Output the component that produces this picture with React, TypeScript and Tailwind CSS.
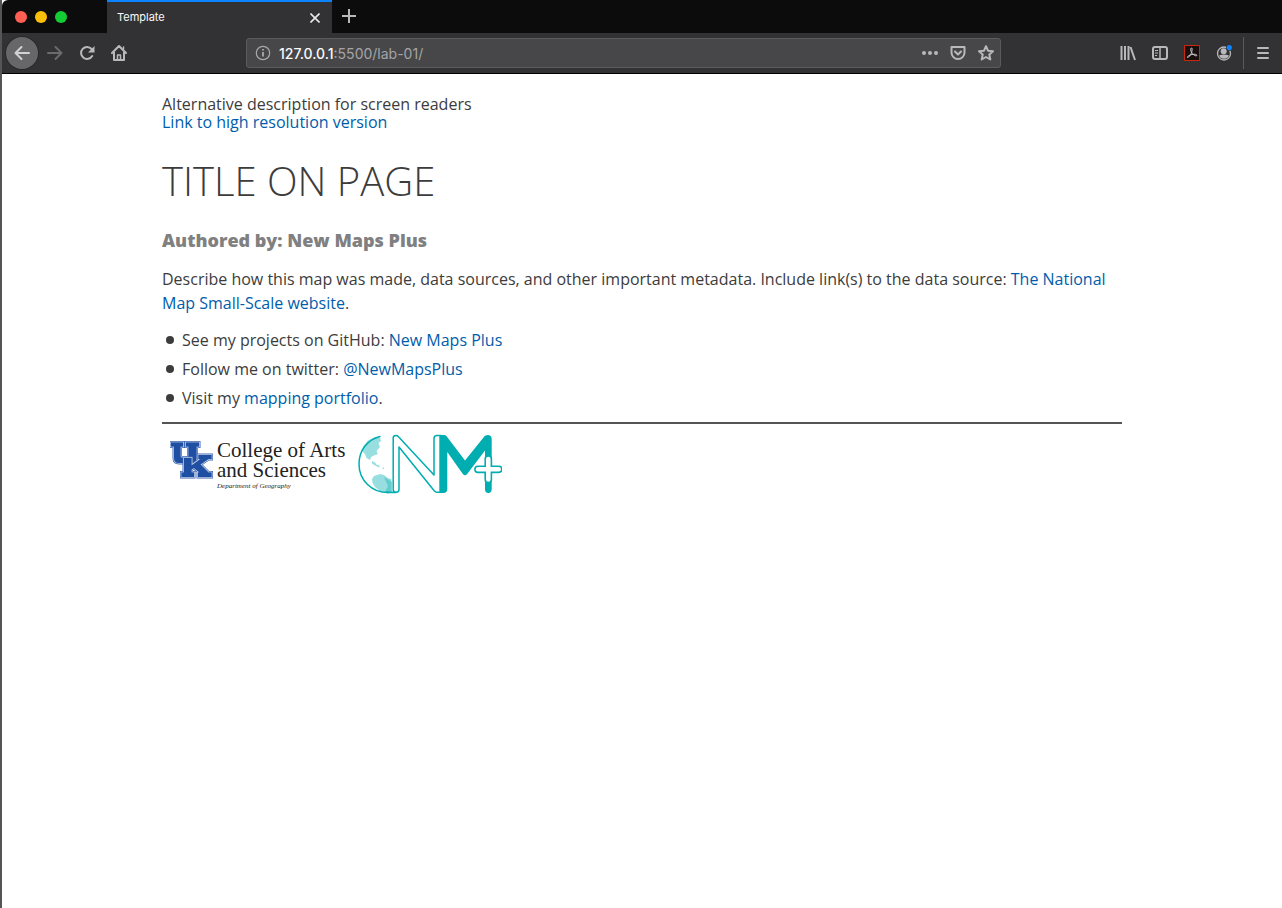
import React from "react";

const icon = "h-4 w-4 fill-none stroke-[#b9b9bb] stroke-2";
const link = "text-[#005dab]";

function Tool({ label, children, className = "" }: { label: string; children: React.ReactNode; className?: string }) {
  return (
    <button type="button" aria-label={label} className={`flex h-8 w-8 shrink-0 items-center justify-center rounded ${className}`}>
      {children}
    </button>
  );
}

function TabBar() {
  return (
    <div className="flex h-[33px] items-stretch rounded-tl-md bg-[#0c0c0d]">
      <div className="flex w-[105px] shrink-0 items-center gap-2 pl-[13px]">
        <button type="button" aria-label="Close window" className="h-3 w-3 rounded-full bg-[#ff5f52]" />
        <button type="button" aria-label="Minimize window" className="h-3 w-3 rounded-full bg-[#febe0a]" />
        <button type="button" aria-label="Zoom window" className="h-3 w-3 rounded-full bg-[#14cc33]" />
      </div>
      <div className="flex w-[225px] items-center justify-between border-t-2 border-[#0a84ff] bg-[#323234] px-2.5 text-[11px] text-[#f9f9fa]">
        <span>Template</span>
        <button type="button" aria-label="Close tab" className="flex h-4 w-3.5 items-center justify-center">
          <svg viewBox="0 0 10 10" className="h-2.5 w-2.5 stroke-[#e8e8e9] stroke-[1.6]"><path d="M.5.5l9 9M9.5.5l-9 9" /></svg>
        </button>
      </div>
      <Tool label="New tab" className="ml-px">
        <svg viewBox="0 0 14 14" className="h-3.5 w-3.5 stroke-[#b9b9bb] stroke-2"><path d="M7 0v14M0 7h14" /></svg>
      </Tool>
    </div>
  );
}

function Toolbar() {
  return (
    <div className="flex h-[41px] items-center border-b border-black bg-[#323234] pr-[3px] pl-1">
      <Tool label="Back" className="!rounded-full bg-[#676769] ring-1 ring-[#29292b]">
        <svg viewBox="0 0 16 16" className="h-4 w-4 fill-none stroke-[#d2d2d3] stroke-2" strokeLinecap="round" strokeLinejoin="round"><path d="M15 8H1.500M7.500 2l-6 6 6 6" /></svg>
      </Tool>
      <Tool label="Forward" className="ml-px">
        <svg viewBox="0 0 16 16" className="h-4 w-4 fill-none stroke-[#6b6b6d] stroke-2" strokeLinecap="round" strokeLinejoin="round"><path d="M1 8h13.500M8.500 2l6 6-6 6" /></svg>
      </Tool>
      <Tool label="Reload">
        <svg viewBox="0 0 16 16" className={icon}><path d="M13.200 11A6 6 0 1 1 12.600 4" strokeLinecap="round" /><path d="M15.500 1v6.500H9z" fill="#b9b9bb" stroke="none" /></svg>
      </Tool>
      <Tool label="Home">
        <svg viewBox="0 0 16 16" className={icon} strokeLinecap="round" strokeLinejoin="round"><path d="M1 8l7-7 7 7M3 7.500V15h10V7.500" /><path d="M6.500 14.500v-4.500h3v4.500M12.500 2v2" strokeWidth="1.500" /></svg>
      </Tool>
      <div className="ml-[111px] flex h-[30px] max-w-[755px] min-w-0 flex-1 items-center rounded-[3px] border border-[#5b5b5d] bg-[#474749] pr-1.5 pl-2">
        <button type="button" aria-label="Site information">
          <svg viewBox="0 0 16 16" className="h-4 w-4 fill-none stroke-[#a9a9ab]"><circle cx="8" cy="8" r="6.700" strokeWidth="1.200" /><path d="M8 7v4.500M8 4v1.600" strokeWidth="1.800" /></svg>
        </button>
        <div className="relative ml-2 h-5 min-w-0 flex-1 text-[14px] leading-[22px]">
          <div aria-hidden="true" className="text-[#a4a4a6]"><span className="font-medium text-[#f9f9fa]">127.0.0.1</span>:5500/lab-01/</div>
          <input aria-label="Address" defaultValue="127.0.0.1:5500/lab-01/" className="absolute inset-0 w-full bg-transparent text-transparent outline-none" />
        </div>
        <div className="flex items-center gap-3">
          <button type="button" aria-label="Page actions"><svg viewBox="0 0 16 16" className="h-4 w-4 fill-[#b9b9bb]"><circle cx="2" cy="8" r="2" /><circle cx="8" cy="8" r="2" /><circle cx="14" cy="8" r="2" /></svg></button>
          <button type="button" aria-label="Save to Pocket"><svg viewBox="0 0 16 16" className={icon} strokeLinecap="round" strokeLinejoin="round"><path d="M1.500 2h13v5.500a6.500 6.500 0 0 1-13 0zM5 6.500l3 3 3-3" /></svg></button>
          <button type="button" aria-label="Bookmark"><svg viewBox="0 0 16 16" className={icon} strokeLinejoin="round"><path d="M8 1.200l2 4.500 5 .5-3.700 3.300 1 5L8 12l-4.300 2.500 1-5L1 6.200l5-.5z" /></svg></button>
        </div>
      </div>
      <div className="ml-auto flex shrink-0 items-center">
        <Tool label="Library"><svg viewBox="0 0 16 16" className={icon}><path d="M1.500 1v14M5 1v14M8.500 1v14M10.500 2l4.500 13" /></svg></Tool>
        <Tool label="Sidebars"><svg viewBox="0 0 16 16" className={icon}><rect x="1" y="2" width="14" height="12" rx="2" /><path d="M8 2v12" strokeWidth="1.500" /><path d="M3 5.500h3M3 8h3M3 10.500h2" strokeWidth="1" /></svg></Tool>
        <Tool label="Adobe Acrobat">
          <svg viewBox="0 0 16 16" className="h-4 w-4"><path d="M.5.500h15v15H.500z" fill="#180f0e" stroke="#c9280f" /><path d="M7.200 3c1.500-.5 1 2.500.3 4.800C6.500 10 4.700 12.800 3.500 12.500 2.500 12 5 10 8 9.500s5-.2 4.800 1-3-.2-4.700-2.300S6.500 3.500 7.200 3z" fill="none" stroke="#c9c9c9" /></svg>
        </Tool>
        <Tool label="Account">
          <svg viewBox="0 0 16 16" className="h-4 w-4 overflow-visible"><circle cx="8" cy="8.500" r="6.500" fill="none" stroke="#b9b9bb" strokeWidth="1.300" /><circle cx="7.700" cy="6.200" r="3" fill="#b9b9bb" /><path d="M3 10.500Q8 8.500 13 10.500Q11.500 13.800 8 13.800T3 10.500z" fill="#b9b9bb" /><circle cx="13.300" cy="2.500" r="3.300" fill="#323234" /><circle cx="13.300" cy="2.500" r="2.600" fill="#0a84ff" /></svg>
        </Tool>
        <div className="ml-[3px] flex items-center border-l border-[#5b5b5d] pl-[3px]">
          <Tool label="Menu"><svg viewBox="0 0 16 16" className={icon}><path d="M3 3h10M3 8h10M3 13h10" strokeLinecap="round" /></svg></Tool>
        </div>
      </div>
    </div>
  );
}

const uPath = "M1 1.500H13V5.500H10.500V14.500q0 2.500 2.500 2.500h3q2.500 0 2.500-2.500V5.500H16V1.500H29V5.500H26.500V17q0 5-5 5H9q-5 0-5-5V5.500H1z";
const kPath = "M14 17h7.500v7.500L30.500 18H28.500v-4H41.500v4H38.500l-8 5.500 8 8h3v4.500H28v-4.500h1.500l-5.500-4.500-2.500 1.500v3H24v4.500H11.500v-4.500H14z";

function ArtsAndSciences() {
  return (
    <div className="flex w-[186px] shrink-0 items-start gap-1 pt-1.5 pl-2 text-[#222]">
      <svg viewBox="0 0 43 38" className="mt-px h-[38px] w-[43px] shrink-0" role="img" aria-label="University of Kentucky" fill="#1e4fa3">
        {[uPath, kPath].map((d) => (
          <g key={d}>
            <path d={d} stroke="#3f68b0" strokeWidth="3" />
            <path d={d} stroke="#dfe7f4" strokeWidth="1.600" />
            <path d={d} stroke="#1e4fa3" strokeWidth=".4" />
          </g>
        ))}
      </svg>
      <div className="font-['Liberation_Serif',serif] text-[21px] leading-5 whitespace-nowrap">
        <div>College of Arts</div>
        <div>and Sciences</div>
        <div className="text-[7px] leading-3 italic">Department of Geography</div>
      </div>
    </div>
  );
}

function NewMapsPlus() {
  return (
    <svg viewBox="0 0 144 60" className="h-[60px] w-36 shrink-0" role="img" aria-label="New Maps Plus" fill="none" stroke="#00adb0" strokeLinejoin="round" strokeLinecap="round">
      <defs>
        <pattern id="land" width="1.500" height="1.500" patternUnits="userSpaceOnUse">
          <circle cx=".75" cy=".75" r=".58" fill="#00adb0" stroke="none" />
        </pattern>
      </defs>
      <path d="M22 3.500L17 3 10 6.500 5 12.500 4 17 7 20 8.500 24 12 26 13 23 17 21 20 20 18.500 17 22 13 20.500 9 23 7z" fill="url(#land)" stroke="none" />
      <path d="M14 27l3 1.500 2 2.500 3 .5-1 2-4-2-3-2zM24 34l2-.5v2zM14 45l2-3 6-2 4 1 3 2.500 4.500 2V58H28l-6-1-5-4-2.500-4z" fill="url(#land)" stroke="none" />
      <path d="M26 43l8 5v10h-7l3-6z" fill="#00adb0" fillOpacity=".35" stroke="none" />
      <path d="M22 2.500C9.500 5.500 1 16.500 1 30c0 16.500 13 28.500 29 28.500" strokeWidth="1.500" />
      <path d="M29 58.300h9" strokeWidth="1.800" />
      <path d="M35.200 56V4q0-2.500 2.700-2.500 1.600 0 2.600 1.200L76 41V4.500q0-3 3-3h4V58.300h-4q-1.500 0-2.800-1.500L41 13V55.500q0 2.800-2.900 2.800t-2.900-2.800z" strokeWidth="1.500" fill="#fff" />
      <path d="M81.300 1H86q1.500 0 2.600 1.300L107 26.500 126.300 2.500Q127.500 1 129.500 1q4.200 0 4.200 4V55q0 4-3.500 4-3.200 0-3.200-4V16.500L109 40.200q-2 2.300-4 0L89.300 18V55q0 4-4 4h-4z" fill="#00adb0" stroke="none" />
      <path d="M130.300 25v20.500M120 35.300h20.700" strokeWidth="7.800" />
      <path d="M130.300 25v20.500M120 35.300h20.700" stroke="#fff" strokeWidth="4.600" />
    </svg>
  );
}

export default function App() {
  return (
    <div className="min-h-screen bg-white pl-0.5 font-['Open_Sans',sans-serif] text-base text-[#3c3c3c] shadow-[inset_2px_0_0_#555]">
      <header className="font-[Inter,sans-serif]">
        <TabBar />
        <Toolbar />
      </header>
      <main className="mx-auto max-w-[960px] pt-[21px]">
        <div className="leading-[18px]">
          <p>Alternative description for screen readers</p>
          <a href="#high-resolution" className={link}>Link to high resolution version</a>
        </div>
        <h1 className="mt-[26px] text-[40px] leading-[48px] font-light uppercase">Title on page</h1>
        <h2 className="mt-[23px] text-[18px] leading-6 font-extrabold text-[#808080]">Authored by: New Maps Plus</h2>
        <p className="mt-[15px] leading-6">
          Describe how this map was made, data sources, and other important metadata. Include link(s) to the data source: <a href="#data" className={link}>The National Map Small-Scale website</a>.
        </p>
        <ul className="mt-[13px] flex flex-col gap-[5px] leading-6">
          <li className="flex items-center gap-2 pl-1 before:h-2 before:w-2 before:rounded-full before:bg-[#3c3c3c]"><span>See my projects on GitHub: <a href="#github" className={link}>New Maps Plus</a></span></li>
          <li className="flex items-center gap-2 pl-1 before:h-2 before:w-2 before:rounded-full before:bg-[#3c3c3c]"><span>Follow me on twitter: <a href="#twitter" className={link}>@NewMapsPlus</a></span></li>
          <li className="flex items-center gap-2 pl-1 before:h-2 before:w-2 before:rounded-full before:bg-[#3c3c3c]"><span>Visit my <a href="#portfolio" className={link}>mapping portfolio</a>.</span></li>
        </ul>
        <hr className="mt-3 border-t-2 border-[#555]" />
        <footer className="flex items-start gap-2.5 pt-2.5">
          <ArtsAndSciences />
          <NewMapsPlus />
        </footer>
      </main>
    </div>
  );
}
